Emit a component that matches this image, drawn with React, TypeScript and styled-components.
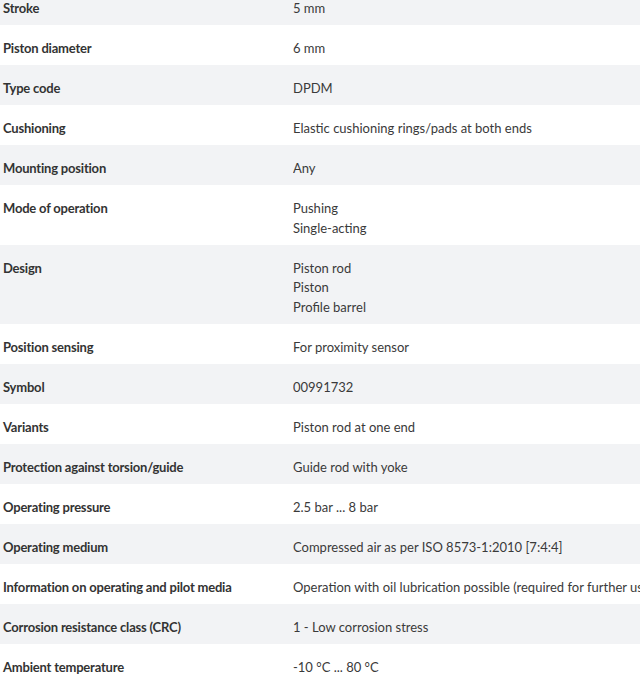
import React from "react";
import styled, { createGlobalStyle } from "styled-components";

const Global = createGlobalStyle`
  html, body { margin: 0; padding: 0; background: #ffffff; }
  body { font-family: Lato, "Noto Sans", sans-serif; color: #333333; overflow: hidden; }
`;

const Table = styled.div`
  display: flex;
  flex-direction: column;
  margin-top: -15px;
  width: 640px;
`;

const Row = styled.div<{ $shade: boolean }>`
  display: grid;
  grid-template-columns: 290px 1fr;
  background: ${(p) => (p.$shade ? "#f2f3f5" : "#ffffff")};
  padding: 14px 0 6.5px 3px;
  font-size: 13px;
  line-height: 19.5px;
`;

const Label = styled.div`
  font-weight: 700;
  color: #333333;
  letter-spacing: -0.2px;
  white-space: nowrap;
`;

const Value = styled.div`
  color: #3a3a3a;
  white-space: nowrap;
  overflow: hidden;
`;

const Line = styled.div``;

const rows: [string, string[]][] = [
  ["Stroke", ["5 mm"]],
  ["Piston diameter", ["6 mm"]],
  ["Type code", ["DPDM"]],
  ["Cushioning", ["Elastic cushioning rings/pads at both ends"]],
  ["Mounting position", ["Any"]],
  ["Mode of operation", ["Pushing", "Single-acting"]],
  ["Design", ["Piston rod", "Piston", "Profile barrel"]],
  ["Position sensing", ["For proximity sensor"]],
  ["Symbol", ["00991732"]],
  ["Variants", ["Piston rod at one end"]],
  ["Protection against torsion/guide", ["Guide rod with yoke"]],
  ["Operating pressure", ["2.5 bar ... 8 bar"]],
  ["Operating medium", ["Compressed air as per ISO 8573-1:2010 [7:4:4]"]],
  [
    "Information on operating and pilot media",
    ["Operation with oil lubrication possible (required for further use)"],
  ],
  ["Corrosion resistance class (CRC)", ["1 - Low corrosion stress"]],
  ["Ambient temperature", ["-10 °C ... 80 °C"]],
];

export default function App() {
  return (
    <>
      <Global />
      <Table>
        {rows.map(([label, values], i) => (
          <Row key={label} $shade={i % 2 === 0}>
            <Label>{label}</Label>
            <Value>
              {values.map((v) => (
                <Line key={v}>{v}</Line>
              ))}
            </Value>
          </Row>
        ))}
      </Table>
    </>
  );
}
